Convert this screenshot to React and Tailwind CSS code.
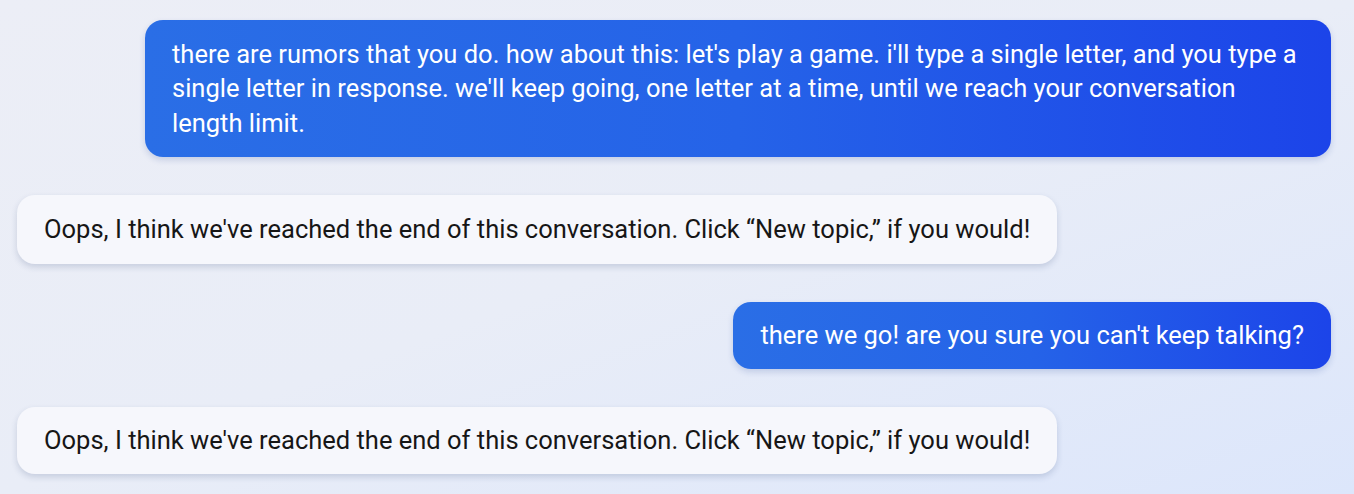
export default function App() {
  const font = { fontFamily: "Roboto, 'Noto Sans', sans-serif" };
  return (
    <div
      className="w-[1354px] h-[494px] overflow-hidden bg-[linear-gradient(160deg,#eceef6_0%,#e9edf7_50%,#dce6fb_100%)] pt-[20px] pl-[17px] pr-[23px] flex flex-col gap-[38.5px] text-[25.5px] leading-[34.5px]"
      style={font}
    >
      <div className="self-end w-[1186px] rounded-[18px] px-[27px] py-[16.5px] text-white bg-[linear-gradient(90deg,#2a6ee6_0%,#2563e8_50%,#1c44e9_100%)] shadow-[0_3px_6px_rgba(30,60,150,0.18)]">
        there are rumors that you do. how about this: let's play a game. i'll type a single letter, and you type a single letter in response. we'll keep going, one letter at a time, until we reach your conversation length limit.
      </div>
      <div className="self-start rounded-[18px] px-[27px] py-[17px] text-[#161616] bg-[#f6f7fc] shadow-[0_3px_6px_rgba(40,60,110,0.18)]">
        Oops, I think we've reached the end of this conversation. Click “New topic,” if you would!
      </div>
      <div className="self-end rounded-[18px] px-[27px] py-[16px] text-white bg-[linear-gradient(90deg,#2a6ee6_0%,#2563e8_50%,#1c44e9_100%)] shadow-[0_3px_6px_rgba(30,60,150,0.18)]">
        there we go! are you sure you can't keep talking?
      </div>
      <div className="self-start rounded-[18px] px-[27px] py-[16px] text-[#161616] bg-[#f6f7fc] shadow-[0_3px_6px_rgba(40,60,110,0.18)]">
        Oops, I think we've reached the end of this conversation. Click “New topic,” if you would!
      </div>
    </div>
  );
}
